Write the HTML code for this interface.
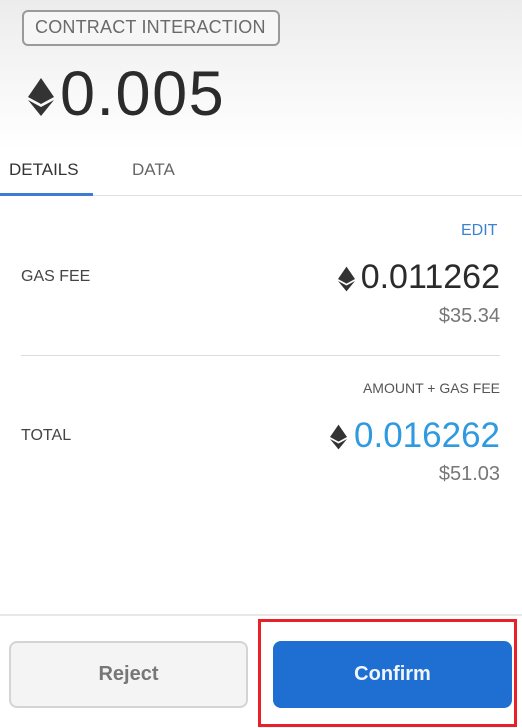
<!DOCTYPE html>
<html><head><style>
*{margin:0;padding:0;box-sizing:border-box}
body{width:522px;height:728px;overflow:hidden;background:#fff;font-family:"Liberation Sans",sans-serif;position:relative}
.a{position:absolute;white-space:nowrap}
.hdr{position:absolute;left:0;top:0;width:522px;height:150px;background:linear-gradient(#ececec,#f6f6f6 50%,#fff)}
</style></head><body>
<div class="hdr"></div>
<div class="a" style="left:22px;top:10px;width:258px;height:36px;border:2px solid #9a9a9a;border-radius:6px;background:#f6f6f6"></div>
<div class="a" style="left:35px;top:17px;font-size:18px;color:#6a6a6a;letter-spacing:0.2px">CONTRACT INTERACTION</div>
<svg class="a" style="left:28px;top:78px" width="26" height="38" viewBox="0 0 26 38"><path d="M13 0L0 19l13 7 13-7z" fill="#333"/><path d="M0 22l13 16 13-16-13 7z" fill="#333"/></svg>
<div class="a" style="left:60px;top:58px;font-size:63px;color:#2b2b2b;letter-spacing:1.5px">0.005</div>
<div class="a" style="left:9px;top:160px;font-size:17px;color:#333">DETAILS</div>
<div class="a" style="left:132px;top:160px;font-size:17px;color:#666">DATA</div>
<div class="a" style="left:0;top:193px;width:93px;height:3px;background:#3e7bd6"></div>
<div class="a" style="left:93px;top:195px;width:429px;height:1px;background:#e0e0e0"></div>
<div class="a" style="left:461px;top:222px;font-size:16px;color:#3b82d0">EDIT</div>
<div class="a" style="left:21px;top:268px;font-size:16px;color:#444">GAS FEE</div>
<svg class="a" style="left:338px;top:266px" width="17" height="26" viewBox="0 0 26 38"><path d="M13 0L0 19l13 7 13-7z" fill="#333"/><path d="M0 22l13 16 13-16-13 7z" fill="#333"/></svg>
<div class="a" style="right:22px;top:258px;font-size:34px;color:#2b2b2b">0.011262</div>
<div class="a" style="right:22px;top:305px;font-size:20px;color:#777">$35.34</div>
<div class="a" style="left:21px;top:355px;width:479px;height:1px;background:#ddd"></div>
<div class="a" style="right:22px;top:380px;font-size:14px;color:#555">AMOUNT + GAS FEE</div>
<div class="a" style="left:21px;top:427px;font-size:16px;color:#444">TOTAL</div>
<svg class="a" style="left:330px;top:424px" width="17" height="26" viewBox="0 0 26 38"><path d="M13 0L0 19l13 7 13-7z" fill="#333"/><path d="M0 22l13 16 13-16-13 7z" fill="#333"/></svg>
<div class="a" style="right:22px;top:416px;font-size:35px;color:#2f9ae0">0.016262</div>
<div class="a" style="right:22px;top:463px;font-size:20px;color:#777">$51.03</div>
<div class="a" style="left:0;top:614px;width:522px;height:2px;background:#e8e8e8"></div>
<div class="a" style="left:9px;top:641px;width:239px;height:67px;border:2px solid #d4d4d4;border-radius:8px;background:#f4f4f4;text-align:center;line-height:63px;font-size:20px;font-weight:bold;color:#777">Reject</div>
<div class="a" style="left:273px;top:641px;width:239px;height:67px;border-radius:8px;background:#1f6fd3;text-align:center;line-height:67px;font-size:20px;font-weight:bold;color:#f0f6ff">Confirm</div>
<div class="a" style="left:258px;top:619px;width:259px;height:108px;border:3px solid #e8202a"></div>
</body></html>
